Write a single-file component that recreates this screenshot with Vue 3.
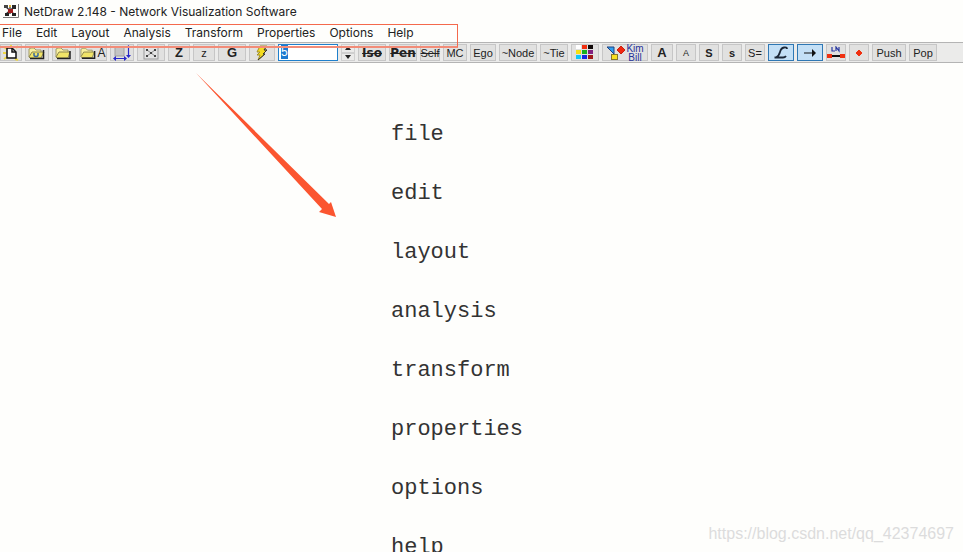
<script setup>
import { onMounted, ref } from 'vue'

const menus = ['File', 'Edit', 'Layout', 'Analysis', 'Transform', 'Properties', 'Options', 'Help']

const nodeSize = ref('5')
const sizeInput = ref(null)
const showLabels = ref(true)
const showArrows = ref(true)

const palette = [
  '#ffffff', '#f03010', '#100808',
  '#f8e010', '#18b020', '#802080',
  '#10c8f8', '#1828e0', '#a01818'
]

const textTools = [
  { label: 'Iso', look: 'w28 wide strike' },
  { label: 'Pen', look: 'w28 wide strike' },
  { label: 'Self', look: 'w20 strike' },
  { label: 'MC', look: 'w24' },
  { label: 'Ego', look: 'w26' },
  { label: '~Node', look: 'w38' },
  { label: '~Tie', look: 'w28' }
]

const fontTools = [
  { label: 'A', title: 'Larger labels', look: 'w22 big' },
  { label: 'A', title: 'Smaller labels', look: 'w20 small' },
  { label: 'S', title: 'Larger symbols', look: 'w20 bold' },
  { label: 's', title: 'Smaller symbols', look: 'w20 bold' },
  { label: 'S=', title: 'Equal symbols', look: 'w20' }
]

function stepSize(delta) {
  nodeSize.value = String(Math.max(0, Number(nodeSize.value) + delta))
}

onMounted(() => {
  sizeInput.value.focus()
  sizeInput.value.select()
})
</script>


<template>
  <div class="window">
    <header class="titlebar">
      <svg class="logo" width="16" height="14" viewBox="0 0 16 14">
        <path d="M0 13.5H15.5V0" fill="none" stroke="#777" />
        <path d="M3 3L11 10M11 3L3 10M7 2V10" stroke="#333" stroke-width="1.3" />
        <rect x="1" y="1" width="4" height="3" fill="#444" />
        <rect x="9" y="1" width="4" height="4" fill="#282828" />
        <rect x="5" y="5" width="5" height="4" fill="#a42020" />
        <rect x="2" y="9" width="4" height="3" fill="#222" />
        <rect x="9" y="9" width="4" height="3" fill="#222" />
        <rect x="6" y="1" width="2" height="2" fill="#d8b030" />
      </svg>
      <span>NetDraw 2.148 - Network Visualization Software</span>
    </header>

    <nav class="menubar">
      <button v-for="m in menus" :key="m" type="button">{{ m }}</button>
    </nav>

    <div class="toolbar">
      <button type="button" class="w22" aria-label="New">
        <svg width="18" height="16" viewBox="0 0 18 16">
          <path d="M2 2L5 4M1 8H4M2 14L5 12M9 0V3M14 3L16 1M13 14L16 15" stroke="#f0d840" stroke-width="2" />
          <path d="M5 3H10L14 7V13H5Z" fill="#fff" stroke="#111" stroke-width="1.5" />
          <path d="M10 3V7H14" fill="none" stroke="#111" stroke-width="1.5" />
        </svg>
      </button>
      <button type="button" class="w24" aria-label="Open UCINET data">
        <svg width="18" height="14" viewBox="0 0 18 14">
          <path d="M1 11V3L3 2H6L8 4H13V6" fill="#f8f0a0" stroke="#a09a68" />
          <path d="M1 11L4 6H16L13 12H2Z" fill="#f0e468" stroke="#8c8650" />
          <path d="M2 12.5H15.5V4" fill="none" stroke="#222" stroke-width="1.5" />
          <path d="M6 7V9Q6 10.5 8 10.5T10 9V7" fill="none" stroke="#3868a0" stroke-width="1.5" />
        </svg>
      </button>
      <button type="button" class="w24" aria-label="Open">
        <svg width="18" height="14" viewBox="0 0 18 14">
          <path d="M1 11V3L3 2H6L8 4H13V6" fill="#f8f0a0" stroke="#a09a68" />
          <path d="M1 11L4 6H15L13 12H2Z" fill="#f0e468" stroke="#8c8650" />
          <path d="M2 12.5H15V5" fill="none" stroke="#222" stroke-width="1.5" />
        </svg>
      </button>
      <button type="button" class="w28" aria-label="Open attributes">
        <svg width="17" height="14" viewBox="0 0 18 14">
          <path d="M1 11V3L3 2H6L8 4H13V6" fill="#f8f0a0" stroke="#a09a68" />
          <path d="M1 11L4 6H15L13 12H2Z" fill="#f0e468" stroke="#8c8650" />
          <path d="M2 12.5H15.5V5" fill="none" stroke="#222" stroke-width="1.5" />
        </svg>
        <span class="letter">A</span>
      </button>
      <button type="button" class="w24" aria-label="Resize">
        <svg width="18" height="16" viewBox="0 0 18 16">
          <rect x="2" y="2" width="9" height="9" fill="#c4c4c4" stroke="#a0a0a0" />
          <path d="M2 13.5H12M15.5 2V11" stroke="#2828c8" stroke-width="1.2" />
          <path d="M3 11L0 13.5L3 16ZM11 11L14 13.5L11 16ZM13 3L15.5 0L18 3ZM13 10L15.5 13L18 10Z" fill="#2828c8" />
        </svg>
      </button>
      <button type="button" class="w28" aria-label="Network layout">
        <svg width="16" height="14" viewBox="0 0 16 14">
          <rect x="1" y="1" width="14" height="12" fill="#e4e4e4" stroke="#999" />
          <path d="M4 4L12 10M12 4L4 10" stroke="#888" />
          <path d="M3 3H5V5H3ZM11 3H13V5H11ZM3 9H5V11H3ZM11 9H13V11H11ZM7 6H9V8H7Z" fill="#444" />
        </svg>
      </button>
      <button type="button" class="w22 big">Z</button>
      <button type="button" class="w22">z</button>
      <button type="button" class="w28 big">G</button>
      <button type="button" class="w26" aria-label="Run layout">
        <svg width="14" height="16" viewBox="0 0 14 16">
          <path d="M5 1H12L9 5H12L8 9H10L3 15L5 10H2L5 7H2Z" fill="#f4dc20" stroke="#a0902c" />
          <path d="M12 1L9 5H12L8 9H10L3 15" fill="none" stroke="#333" />
        </svg>
      </button>
      <input ref="sizeInput" v-model="nodeSize" class="size" type="text" aria-label="Node size" />
      <div class="spin">
        <button type="button" aria-label="Increase" @click="stepSize(1)">
          <svg width="6" height="4" viewBox="0 0 6 4"><path d="M0 4L3 0L6 4Z" fill="#222" /></svg>
        </button>
        <button type="button" aria-label="Decrease" @click="stepSize(-1)">
          <svg width="6" height="4" viewBox="0 0 6 4"><path d="M0 0L3 4L6 0Z" fill="#222" /></svg>
        </button>
      </div>
      <button v-for="t in textTools" :key="t.label" type="button" :class="t.look">{{ t.label }}</button>
      <button type="button" class="w28" aria-label="Colors">
        <svg width="18" height="15" viewBox="0 0 18 15">
          <rect
            v-for="(c, i) in palette"
            :key="i"
            :x="(i % 3) * 6"
            :y="Math.floor(i / 3) * 5"
            width="5"
            height="4"
            :fill="c"
          />
        </svg>
      </button>
      <button type="button" class="w46" aria-label="Node shapes and names">
        <svg width="20" height="16" viewBox="0 0 20 16">
          <path d="M1 2H8V9Z" fill="#30a0f0" stroke="#204080" />
          <path d="M15 1L19 5L15 9L11 5Z" fill="#f02810" stroke="#c82010" />
          <rect x="5.5" y="9.5" width="6" height="5" fill="#f8e020" stroke="#88782c" />
        </svg>
        <span class="names"><span>Kim</span><span>Bill</span></span>
      </button>
      <button
        v-for="t in fontTools"
        :key="t.title"
        type="button"
        :class="t.look"
        :aria-label="t.title"
      >{{ t.label }}</button>
      <button type="button" class="w26" :class="{ on: showLabels }" aria-label="Labels" @click="showLabels = !showLabels">
        <svg width="16" height="14" viewBox="0 0 16 14">
          <path d="M14 3Q14 1 11 1.5Q8 2 7 6Q6 10 3 11.5H1.5M3 11.5H10Q12 11.5 13 10" fill="none" stroke="#1c2838" stroke-width="1.8" />
        </svg>
      </button>
      <button type="button" class="w26" :class="{ on: showArrows }" aria-label="Arrowheads" @click="showArrows = !showArrows">
        <svg width="14" height="8" viewBox="0 0 14 8">
          <path d="M1 4H10" stroke="#111" />
          <path d="M9 0L13 4L9 8Z" fill="#111" />
        </svg>
      </button>
      <button type="button" class="w20" aria-label="Tie labels">
        <svg width="18" height="14" viewBox="0 0 18 14">
          <path d="M5 1V5H8M9 5V1L12 5V1" fill="none" stroke="#2838a0" stroke-width="1.2" />
          <path d="M3 10H15" stroke="#111" stroke-width="2" />
          <path d="M0 8H5V12H0ZM13 8H18V12H13Z" fill="#f03010" />
        </svg>
      </button>
      <button type="button" class="w20" aria-label="Node">
        <svg width="8" height="8" viewBox="0 0 8 8"><path d="M4 1L7 4L4 7L1 4Z" fill="#f03010" stroke="#f03010" /></svg>
      </button>
      <button type="button" class="w34">Push</button>
      <button type="button" class="w28">Pop</button>
    </div>

    <main class="canvas">
      <ul>
        <li v-for="m in menus" :key="m">{{ m.toLowerCase() }}</li>
      </ul>
    </main>

    <div class="marker"></div>
    <svg class="arrow" width="142" height="146" viewBox="0 0 142 146">
      <path d="M0 0L133 131L135 129L140 144L123 139L126 136Z" fill="#fb5530" />
    </svg>
    <span class="watermark">https://blog.csdn.net/qq_42374697</span>
  </div>
</template>


<style>
body {
  background: #fefefc;
}
</style>

<style scoped>
.window {
  position: relative;
  display: flex;
  flex-direction: column;
  height: 100vh;
  overflow: hidden;
  background: #fefefc;
  color: #222;
  font-family: Inter, "Noto Sans", sans-serif;
  font-size: 12px;
}

button {
  padding: 0;
  border: none;
  background: none;
  color: inherit;
  font: inherit;
}

svg {
  display: block;
  flex: none;
}

.titlebar {
  display: flex;
  align-items: center;
  gap: 5px;
  height: 22px;
  padding-left: 3px;
}

.menubar {
  display: flex;
  align-items: center;
  gap: 14px;
  height: 20px;
  padding-left: 2px;
}

.toolbar {
  display: flex;
  gap: 3px;
  height: 17px;
  padding: 1px 0;
  border-top: 1px solid #b4b4b4;
  border-bottom: 1px solid #b4b4b4;
  background: #ebebea;
  font-family: "Liberation Sans", Arial, sans-serif;
  font-size: 11px;
}

.toolbar > button {
  display: flex;
  flex: none;
  align-items: center;
  justify-content: center;
  box-sizing: border-box;
  border: 1px solid #c6c6c6;
  background: #e1e1e0;
  white-space: nowrap;
}

.toolbar > .on {
  border-color: #2f78b4;
  background: #c4e0f6;
}

.w20 { width: 20px; }
.w22 { width: 22px; }
.w24 { width: 24px; }
.w26 { width: 26px; }
.w28 { width: 28px; }
.w34 { width: 34px; }
.w38 { width: 38px; }
.w46 { width: 46px; }

.toolbar > .big {
  font-size: 13px;
  font-weight: bold;
}

.toolbar > .bold {
  font-weight: bold;
}

.toolbar > .small {
  font-size: 9px;
}

.toolbar > .wide {
  font-family: "DejaVu Sans", sans-serif;
  font-size: 12px;
  font-weight: bold;
}

.toolbar > .strike {
  text-decoration: line-through;
}

.letter {
  font-size: 12px;
}

.size {
  box-sizing: border-box;
  width: 60px;
  padding: 0 2px 2px;
  border: 1px solid #1f80cc;
  outline: none;
  background: #fff;
  font-family: "Liberation Sans", Arial, sans-serif;
  font-size: 12px;
}

.size::selection {
  background: #1c78d0;
  color: #fff;
}

.spin {
  display: flex;
  flex-direction: column;
  width: 14px;
}

.spin button {
  display: flex;
  flex: 1;
  align-items: center;
  justify-content: center;
  border: 1px solid #d0d0d0;
}

.names {
  display: flex;
  flex-direction: column;
  color: #28329a;
  font-size: 10px;
  line-height: 9px;
}

.canvas {
  flex: 1;
  min-height: 0;
  padding: 42px 0 0 391px;
}

.canvas ul {
  margin: 0;
  padding: 0;
  list-style: none;
  color: #333;
  font-family: "Liberation Mono", "Courier New", monospace;
  font-size: 22px;
  line-height: 59px;
}

/* annotations drawn over the window */
.marker {
  position: absolute;
  top: 24px;
  left: -2px;
  z-index: 1;
  width: 458px;
  height: 21px;
  border: 1px solid #f4694c;
  border-bottom: 2px solid #f28c78;
  pointer-events: none;
}

.arrow {
  position: absolute;
  top: 73px;
  left: 196px;
  pointer-events: none;
}

.watermark {
  position: absolute;
  right: 9px;
  bottom: 9px;
  color: #dcdcdc;
  font-family: "Liberation Sans", Arial, sans-serif;
  font-size: 16px;
}
</style>
